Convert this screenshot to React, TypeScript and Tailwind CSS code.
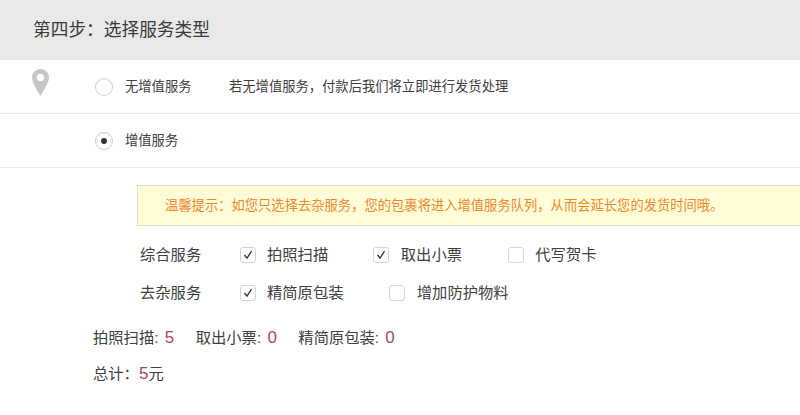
const fontStack = {
  fontFamily: '"Liberation Sans", "Noto Sans CJK SC", sans-serif',
};

type RadioRowProps = {
  label: string;
  checked?: boolean;
  hint?: string;
  showPin?: boolean;
};

function PinIcon() {
  return (
    <svg className="h-[27px] w-[17px]" viewBox="0 0 17 27">
      <path
        d="M8.5 0C3.8 0 0 3.7 0 8.4c0 5 5.5 13.4 8.5 18.6C11.5 21.8 17 13.4 17 8.4 17 3.7 13.2 0 8.5 0Zm0 12a3.6 3.6 0 1 1 0-7.2 3.6 3.6 0 0 1 0 7.2Z"
        fill="#c6c6c6"
        fillRule="evenodd"
      />
    </svg>
  );
}

function RadioRow({ label, checked, hint, showPin }: RadioRowProps) {
  return (
    <div className="flex h-[54px] items-center border-b border-[#ececec] pl-[95px] text-[13.3px] text-[#404040]">
      <span className="flex size-[18px] items-center justify-center rounded-full border border-[#cfcfcf] shadow-[inset_0_1px_1px_rgba(0,0,0,0.05)]">
        {checked ? <span className="size-[6px] rounded-full bg-[#333]" /> : null}
      </span>
      <span className="ml-3 w-[104px]">{label}</span>
      {hint ? <span>{hint}</span> : null}
      {showPin ? (
        <span className="absolute left-[32px] top-[69px]">
          <PinIcon />
        </span>
      ) : null}
    </div>
  );
}

type OptionProps = {
  label: string;
  checked?: boolean;
  widthClass: string;
};

function Option({ label, checked, widthClass }: OptionProps) {
  return (
    <div className={`flex items-center ${widthClass}`}>
      <span className="flex size-[16px] items-center justify-center rounded-[3px] border border-[#d4d4d4] bg-white">
        {checked ? (
          <svg className="size-[12px]" viewBox="0 0 12 12">
            <path d="M2.5 6 5 9.2 9.5 2.2" fill="none" stroke="#333" strokeWidth="1.3" />
          </svg>
        ) : null}
      </span>
      <span className="ml-[11.5px]">{label}</span>
    </div>
  );
}

function Count({ label, value }: { label: string; value: string }) {
  return (
    <span className="mr-[21.5px]">
      {label}: <span className="ml-[2px] text-[17px] text-[#a8475f]">{value}</span>
    </span>
  );
}

export default function App() {
  return (
    <div className="relative h-[415px] w-[800px] overflow-hidden bg-white" style={fontStack}>
      <div className="flex h-[60px] items-center bg-[#e9e9e9] pl-[33px] text-[17.7px] text-[#3a3a3a]">
        第四步：选择服务类型
      </div>
      <RadioRow
        hint="若无增值服务，付款后我们将立即进行发货处理"
        label="无增值服务"
        showPin
      />
      <RadioRow checked label="增值服务" />

      <div className="ml-[137px] mt-[17px] flex h-[41px] items-center border border-[#dcdcc8] border-r-0 bg-[#fffdd8] pl-[27px] text-[13.3px] text-[#f0862e]">
        温馨提示：如您只选择去杂服务，您的包裹将进入增值服务队列，从而会延长您的发货时间哦。
      </div>

      <div className="ml-[140px] mt-[10px] text-[15.3px] text-[#404040]">
        <div className="flex h-[38px] items-center">
          <span className="w-[99.5px]">综合服务</span>
          <Option checked label="拍照扫描" widthClass="w-[133.8px]" />
          <Option checked label="取出小票" widthClass="w-[134.5px]" />
          <Option label="代写贺卡" widthClass="w-[120px]" />
        </div>
        <div className="flex h-[38px] items-center">
          <span className="w-[99.5px]">去杂服务</span>
          <Option checked label="精简原包装" widthClass="w-[149.8px]" />
          <Option label="增加防护物料" widthClass="w-[150px]" />
        </div>
      </div>

      <div className="ml-[93px] mt-[8px] text-[15.3px] leading-[36px] text-[#404040]">
        <div>
          <Count label="拍照扫描" value="5" />
          <Count label="取出小票" value="0" />
          <Count label="精简原包装" value="0" />
        </div>
        <div>
          总计：<span className="text-[17px] text-[#a8475f]">5</span>元
        </div>
      </div>
    </div>
  );
}
